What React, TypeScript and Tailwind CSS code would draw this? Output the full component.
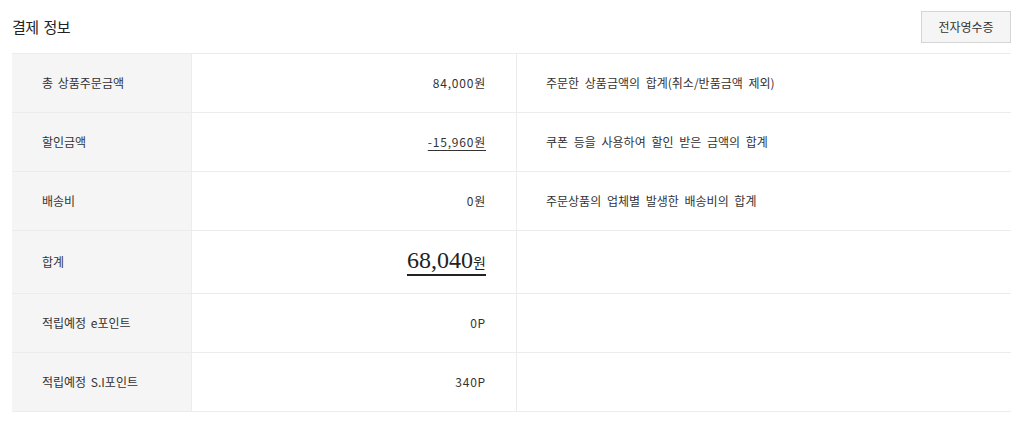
const rows = [
  { label: "총 상품주문금액", value: "84,000원", desc: "주문한 상품금액의 합계(취소/반품금액 제외)" },
  { label: "할인금액", value: "-15,960원", desc: "쿠폰 등을 사용하여 할인 받은 금액의 합계", underline: true },
  { label: "배송비", value: "0원", desc: "주문상품의 업체별 발생한 배송비의 합계" },
  { label: "합계", value: "68,040", total: true },
  { label: "적립예정 e포인트", value: "0P" },
  { label: "적립예정 S.I포인트", value: "340P" },
];

export default function App() {
  return (
    <div
      className="w-[1031px] h-[429px] bg-white pl-3 pr-5 text-[12px] text-[#333]"
      style={{ fontFamily: '"Noto Sans CJK KR", "Noto Sans", sans-serif' }}
    >
      <div className="flex h-[53px] items-center justify-between pt-[1px]">
        <h2 className="text-[15px] font-normal text-[#222] tracking-[-0.5px] [word-spacing:2px]">결제 정보</h2>
        <button className="mt-[-1px] h-[32px] w-[90px] border border-[#d5d5d5] bg-[#f5f5f5] text-[12px] text-[#333]">
          전자영수증
        </button>
      </div>
      <div className="border-t border-[#ececec]">
        {rows.map((r) => (
          <div
            key={r.label}
            className={`grid grid-cols-[180px_325px_1fr] border-b border-[#ececec] ${r.total ? "h-[63px]" : "h-[59px]"}`}
          >
            <div className="flex items-center border-r border-[#ececec] bg-[#f5f5f5] pl-[30px] [word-spacing:2px]">
              {r.label}
            </div>
            <div className="flex items-center justify-end border-r border-[#ececec] pr-[30px]">
              {r.total ? (
                <span className="border-b-2 border-[#222] leading-none pb-[2px] text-[#222]">
                  <span className="text-[24px]" style={{ fontFamily: '"Liberation Serif", serif' }}>
                    {r.value}
                  </span>
                  <span className="text-[14px]">원</span>
                </span>
              ) : (
                <span className={`tracking-[0.8px] ${r.underline ? "underline underline-offset-[3px]" : ""}`}>
                  {r.value}
                </span>
              )}
            </div>
            <div className="flex items-center pl-[29px] [word-spacing:3px]">{r.desc}</div>
          </div>
        ))}
      </div>
    </div>
  );
}
